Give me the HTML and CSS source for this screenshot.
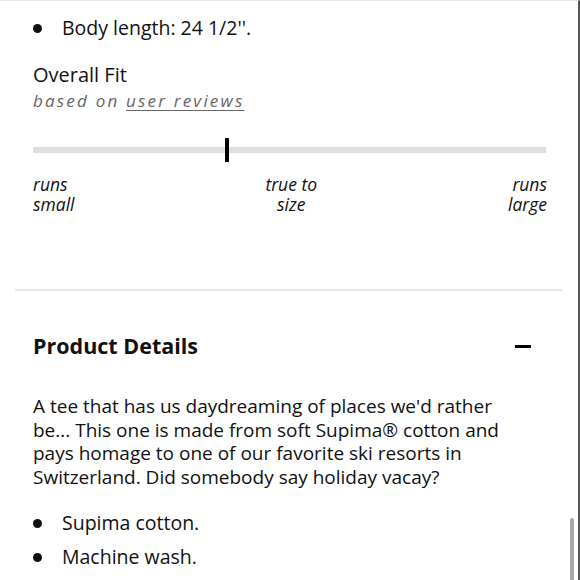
FILE: index.html
```html
<!DOCTYPE html>
<html>
<head>
<meta charset="utf-8">
<link rel="stylesheet" href="styles.css">
</head>
<body>
<div class="frame">
  <div class="content">
    <ul class="bullets first">
      <li>Body length: 24 1/2''.</li>
    </ul>
    <div class="fit">
      <div class="fit-title">Overall Fit</div>
      <div class="fit-sub">based on <span class="link">user reviews</span></div>
      <div class="track"><span class="marker"></span></div>
      <div class="labels">
        <span class="lab left">runs<br>small</span>
        <span class="lab mid">true to<br>size</span>
        <span class="lab right">runs<br>large</span>
      </div>
    </div>
  </div>
  <hr class="divider">
  <div class="content">
    <div class="section-head">
      <h2>Product Details</h2>
      <span class="minus"></span>
    </div>
    <p class="desc">A tee that has us daydreaming of places we'd rather<br>be... This one is made from soft Supima® cotton and<br>pays homage to one of our favorite ski resorts in<br>Switzerland. Did somebody say holiday vacay?</p>
    <ul class="bullets last">
      <li>Supima cotton.</li>
      <li>Machine wash.</li>
    </ul>
  </div>
  <div class="scrollbar"></div>
</div>
</body>
</html>
```
FILE: styles.css
```css
html, body {
  margin: 0;
  padding: 0;
  background: #fff;
}
body {
  font-family: "Open Sans", "Noto Sans", sans-serif;
  color: #111;
  width: 580px;
  height: 580px;
  overflow: hidden;
}
.frame {
  position: relative;
  width: 580px;
  height: 580px;
  border-right: 2px solid #555;
  border-top: 1px solid #e6e6e6;
  box-sizing: border-box;
}
.content {
  padding: 0 30px 0 33px;
}
.bullets {
  list-style: none;
  margin: 0;
  padding: 0;
}
.bullets li {
  position: relative;
  padding-left: 29px;
  font-size: 19.5px;
  line-height: 34px;
}
.bullets li::before {
  content: "";
  position: absolute;
  left: 0;
  top: 13px;
  width: 9px;
  height: 9px;
  border-radius: 50%;
  background: #111;
}
.first {
  padding-top: 10px;
}
.fit {
  padding-top: 17px;
}
.fit-title {
  font-size: 20px;
  line-height: 26px;
}
.fit-sub {
  font-size: 17px;
  line-height: 26px;
  font-style: italic;
  color: #666;
  letter-spacing: 2.2px;
}
.link {
  text-decoration: underline;
  text-underline-offset: 3px;
}
.track {
  position: relative;
  margin-top: 33px;
  height: 6px;
  background: #dedede;
  width: 513px;
}
.marker {
  position: absolute;
  left: 192px;
  top: -9px;
  width: 4px;
  height: 24px;
  background: #000;
}
.labels {
  display: flex;
  justify-content: space-between;
  margin-top: 21px;
  width: 514px;
  height: 100px;
}
.lab {
  font-style: italic;
  font-size: 17.5px;
  line-height: 20px;
}
.mid { text-align: center; }
.right { text-align: right; }
.divider {
  border: 0;
  height: 2px;
  background: #e6e6e6;
  margin: 15px 16px 0 15px;
}
.section-head {
  display: flex;
  justify-content: space-between;
  align-items: center;
  margin-top: 41px;
}
.section-head h2 {
  margin: 0;
  font-size: 21.5px;
  line-height: 28px;
  font-weight: 700;
}
.minus {
  width: 16px;
  height: 3px;
  background: #000;
  margin-right: 17px;
}
.desc {
  margin: 35px 0 0;
  font-size: 19px;
  line-height: 23.5px;
}
.last {
  margin-top: 17px;
}
.scrollbar {
  position: absolute;
  right: 4px;
  top: 517px;
  width: 4px;
  height: 70px;
  background: #aaa;
  border-radius: 2px;
}
```
